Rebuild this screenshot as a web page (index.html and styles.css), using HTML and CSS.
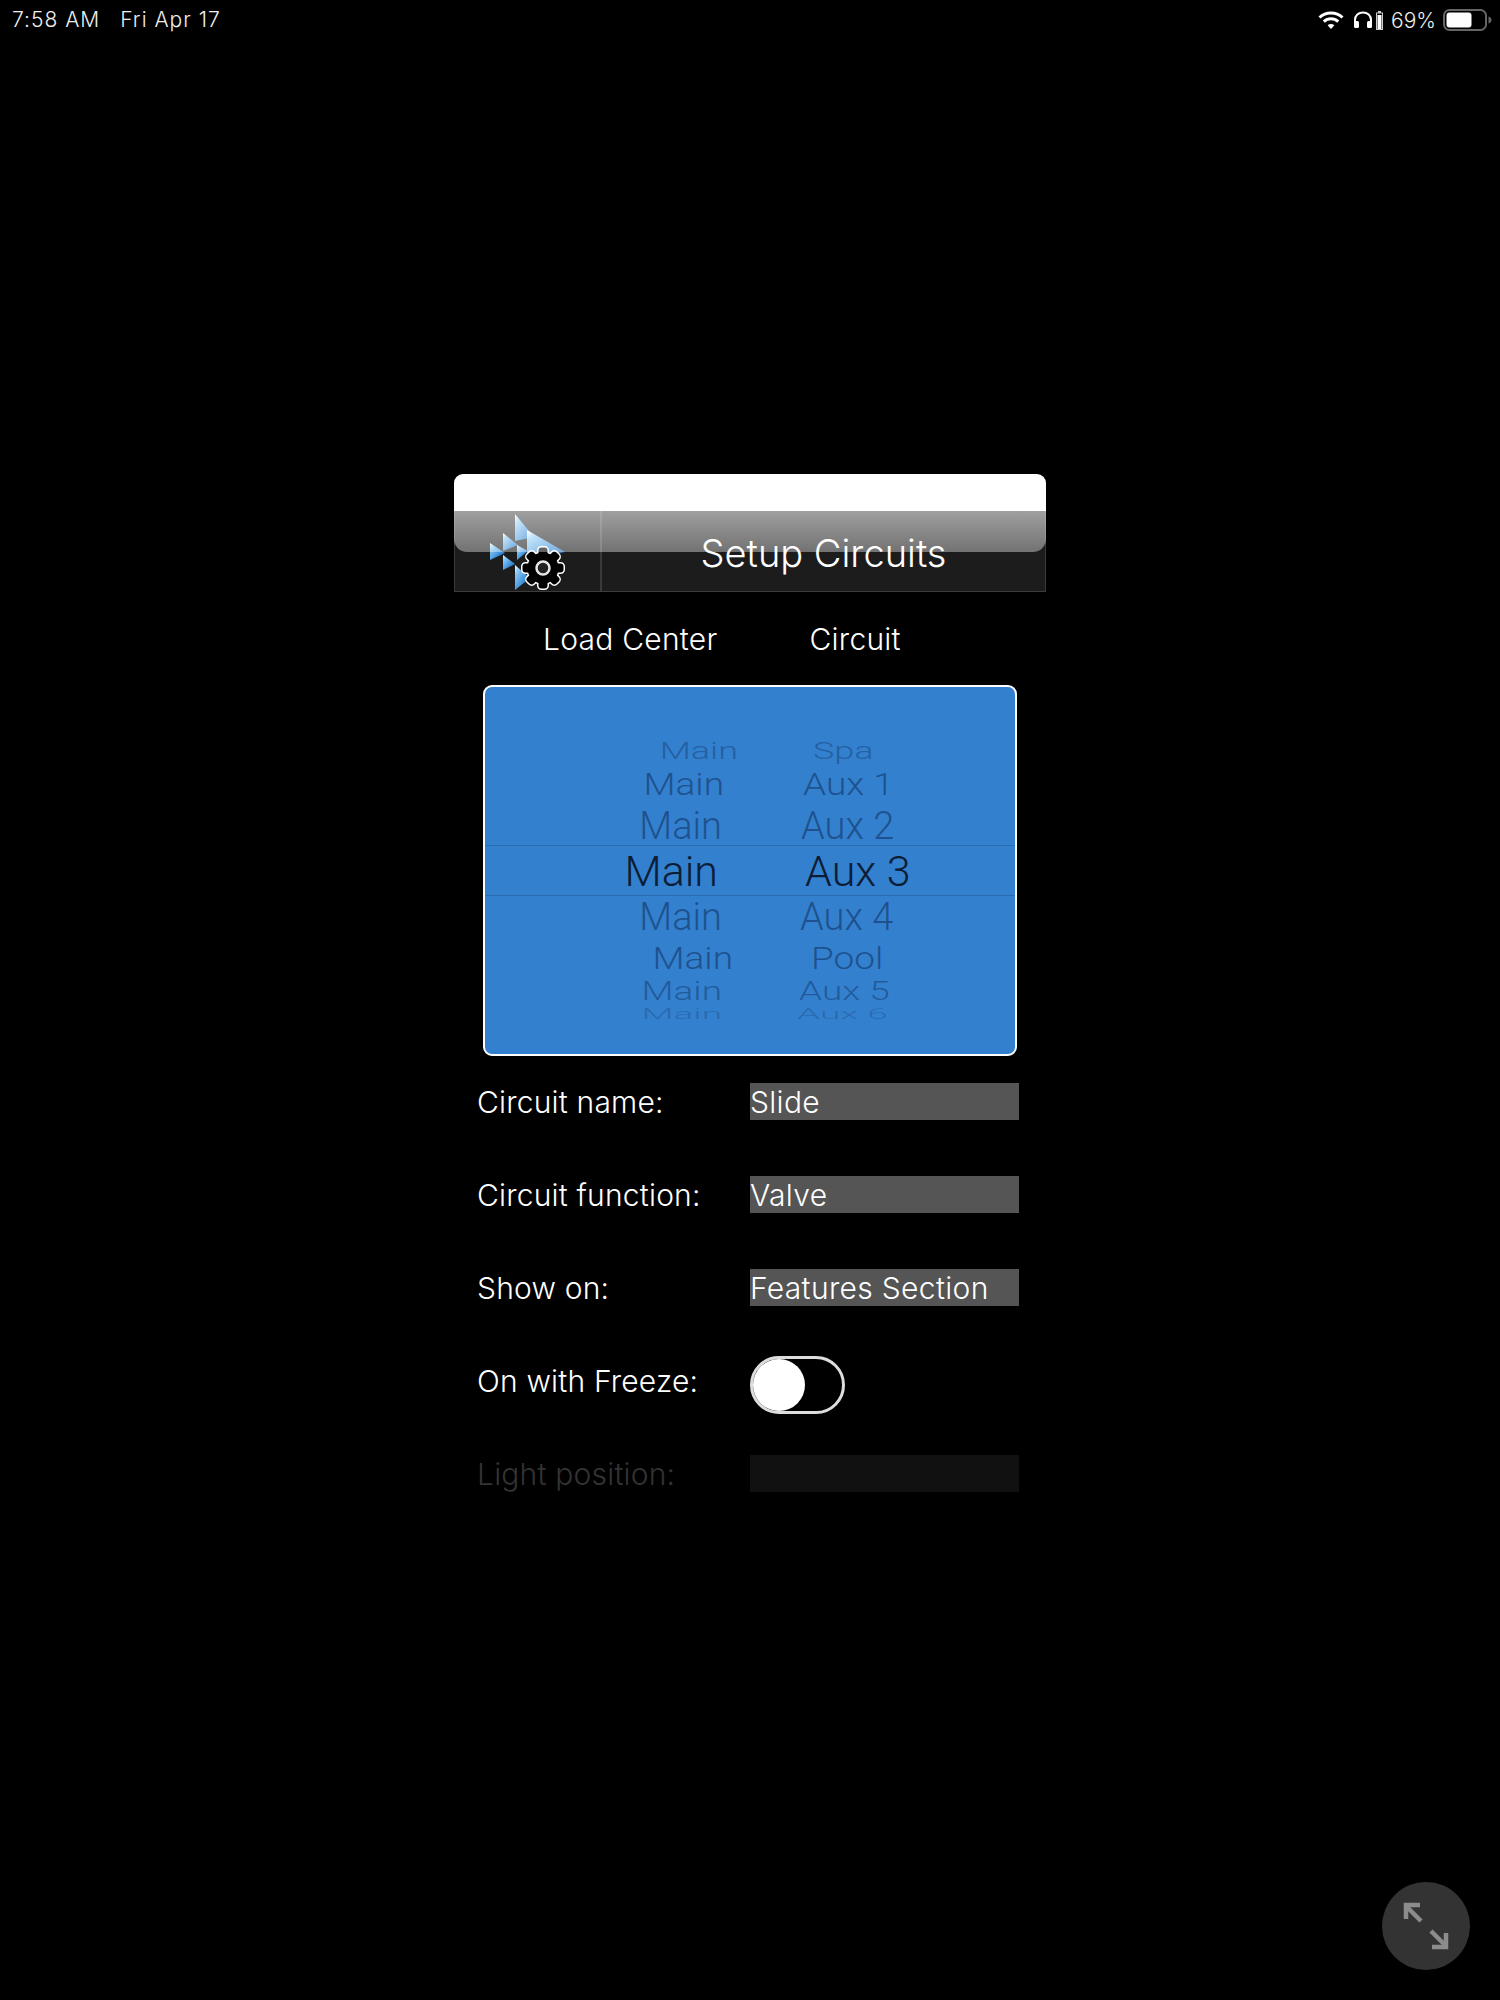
FILE: index.html
```html
<!DOCTYPE html>
<html lang="en">
<head>
<meta charset="utf-8">
<title>Setup Circuits</title>
<link rel="stylesheet" href="styles.css">
</head>
<body>
<div class="screen">
  <header class="status">
    <div class="status-left"><span>7:58 AM</span><span>Fri Apr 17</span></div>
    <div class="status-right">
      <svg class="ic-wifi" width="26" height="20" viewBox="0 0 26 20"><path d="M1.5 7.5C7.8 1.6 18.2 1.6 24.5 7.5" fill="none" stroke="#fff" stroke-width="3"/><path d="M5.8 11.6C9.9 7.9 16.1 7.9 20.2 11.6" fill="none" stroke="#fff" stroke-width="3"/><path d="M9.6 15.3C11.6 13.7 14.4 13.7 16.4 15.3L13 19Z" fill="#fff"/></svg>
      <svg class="ic-head" width="20" height="18" viewBox="0 0 20 18"><path d="M2 12V9C2 4.5 5.5 1.5 10 1.5S18 4.500 18 9V12" fill="none" stroke="#fff" stroke-width="2"/><rect x="1" y="10" width="5" height="7" rx="1.500" fill="#fff"/><rect x="14" y="10" width="5" height="7" rx="1.500" fill="#fff"/></svg>
      <svg class="ic-mini" width="7" height="19" viewBox="0 0 7 19"><rect x="2" y="0" width="3" height="2" fill="#ccc"/><rect x=".5" y="2" width="6" height="16.500" fill="none" stroke="#ccc"/><rect x="1.500" y="4" width="4" height="14" fill="#fff"/></svg>
      <span class="pct">69%</span>
      <svg class="ic-batt" width="49" height="22" viewBox="0 0 49 22"><rect x="1" y="1" width="42" height="20" rx="5.500" fill="none" stroke="#666" stroke-width="2"/><rect x="3.500" y="3.500" width="25" height="15" rx="3" fill="#fff"/><path d="M45.500 7.500C47.500 8 48.500 9.500 48.500 11S47.500 14 45.500 14.500Z" fill="#666"/></svg>
    </div>
  </header>

  <main class="panel">
    <section class="titlebar">
      <div class="title-white"></div>
      <div class="title-dark">
        <div class="logo-cell">
          <svg width="90" height="78" viewBox="0 0 90 78">
            <defs>
              <linearGradient id="tri" x1="0" y1="0" x2="1" y2="1">
                <stop offset="0" stop-color="#ffffff"/>
                <stop offset=".2" stop-color="#8ccaf2"/>
                <stop offset=".6" stop-color="#3f92dc"/>
                <stop offset="1" stop-color="#1464b8"/>
              </linearGradient>
              <g id="gear">
                <circle cx="0" cy="0" r="15.500"/>
                <rect x="-4.500" y="-20.500" width="9" height="41" rx="3"/>
                <rect x="-4.500" y="-20.500" width="9" height="41" rx="3" transform="rotate(45)"/>
                <rect x="-4.500" y="-20.500" width="9" height="41" rx="3" transform="rotate(90)"/>
                <rect x="-4.500" y="-20.500" width="9" height="41" rx="3" transform="rotate(135)"/>
              </g>
            </defs>
            <path d="M35 0L54 23L35 27Z" fill="url(#tri)"/>
            <path d="M47 16L85 38L47 46Z" fill="url(#tri)"/>
            <path d="M23 19L38 31L23 37Z" fill="url(#tri)"/>
            <path d="M10 29L25 39L10 46Z" fill="url(#tri)"/>
            <path d="M37 31L48 37L37 46Z" fill="url(#tri)"/>
            <path d="M23 41L35 50L23 56Z" fill="url(#tri)"/>
            <path d="M35 51L50 64L35 76Z" fill="url(#tri)"/>
            <g transform="translate(63 54)">
              <use href="#gear" fill="#fff" stroke="#fff" stroke-width="3"/>
              <use href="#gear" fill="#000"/>
              <circle r="6.500" fill="#222" stroke="#e6e6e6" stroke-width="2.500"/>
            </g>
          </svg>
        </div>
        <h1 class="title">Setup Circuits</h1>
        <div class="gloss"></div>
      </div>
    </section>

    <div class="col-heads"><span>Load Center</span><span>Circuit</span></div>

    <section class="picker">
      <div class="band"></div>
      <div class="wheel r1"><span class="c1">Main</span><span class="c2">Spa</span></div>
      <div class="wheel r2"><span class="c1">Main</span><span class="c2">Aux 1</span></div>
      <div class="wheel r3"><span class="c1">Main</span><span class="c2">Aux 2</span></div>
      <div class="wheel sel"><span class="c1">Main</span><span class="c2">Aux 3</span></div>
      <div class="wheel r5"><span class="c1">Main</span><span class="c2">Aux 4</span></div>
      <div class="wheel r6"><span class="c1">Main</span><span class="c2">Pool</span></div>
      <div class="wheel r7"><span class="c1">Main</span><span class="c2">Aux 5</span></div>
      <div class="wheel r8"><span class="c1">Main</span><span class="c2">Aux 6</span></div>
    </section>

    <section class="form">
      <div class="row"><span class="lbl">Circuit name:</span><span class="val">Slide</span></div>
      <div class="row"><span class="lbl">Circuit function:</span><span class="val">Valve</span></div>
      <div class="row"><span class="lbl">Show on:</span><span class="val">Features Section</span></div>
      <div class="row"><span class="lbl">On with Freeze:</span><span class="toggle"><span class="knob"></span></span></div>
      <div class="row off"><span class="lbl">Light position:</span><span class="val"></span></div>
    </section>
  </main>

  <div class="expand">
    <svg width="88" height="88" viewBox="0 0 88 88">
      <g fill="none" stroke="#8c8c8c" stroke-width="4.500">
        <path d="M24 24L39 39"/><path d="M24 37V23H38"/>
        <path d="M64 64L49 49"/><path d="M64 51V65H50"/>
      </g>
    </svg>
  </div>
</div>
</body>
</html>
```

FILE: styles.css
```css
* { box-sizing: border-box; }
html, body { margin: 0; padding: 0; background: #000; }
body { font-family: Inter, Roboto, "Liberation Sans", sans-serif; color: #fff; }
.screen { position: relative; width: 1500px; height: 2000px; background: #000; overflow: hidden; }

.status { height: 40px; display: flex; justify-content: space-between; align-items: center; padding: 0 8px 2px 12px; font-size: 21px; letter-spacing: 1px; font-weight: 300; color: #eee; }
.status-left { display: flex; gap: 20px; }
.status-right { display: flex; align-items: center; padding-top: 2px; }
.ic-wifi { margin-right: 9px; }
.ic-head { margin-right: 3px; }
.ic-mini { margin-right: 8px; }
.pct { width: 46px; margin-right: 6px; letter-spacing: 0; white-space: nowrap; }

.panel { width: 592px; margin: 434px 0 0 454px; }

.titlebar { height: 118px; display: flex; flex-direction: column; }
.title-white { flex: none; height: 37px; background: #fff; border-radius: 9px 9px 0 0; }
.title-dark { position: relative; flex: none; height: 81px; display: flex; background: #1c1c1c; border: 1px solid #3c3c3c; border-top: 0; }
.logo-cell { width: 147px; height: 80px; border-right: 2px solid #3a3a3a; padding: 3px 0 0 25px; }
.logo-cell svg { display: block; overflow: visible; }
.title { flex: 1; margin: 0; text-align: center; font-weight: 300; font-size: 38px; line-height: 84px; height: 80px; }
.gloss { position: absolute; left: -1px; right: -1px; top: 0; height: 41px; border-radius: 0 0 13px 13px; background: linear-gradient(rgba(255,255,255,.58), rgba(255,255,255,.38)); }

.col-heads { display: flex; gap: 92px; padding-left: 89px; margin-top: 29px; height: 37px; font-size: 30px; letter-spacing: .25px; font-weight: 300; line-height: 37px; }

.picker { position: relative; width: 534px; height: 371px; margin: 27px 0 0 29px; background: #3380ce; border: 2px solid #fff; border-radius: 9px; padding-top: 38px; overflow: hidden; }
.band { position: absolute; left: 0; right: 0; top: 158px; height: 51px; border-top: 1px solid #2a6aae; border-bottom: 1px solid #2a6aae; }
.wheel { display: flex; align-items: flex-end; font-family: Roboto, Inter, sans-serif; font-weight: 300; font-size: 36px; line-height: 36px; color: rgba(16,50,98,.6); }
.c1, .c2 { display: block; white-space: nowrap; transform-origin: 50% 84%; transform: scaleY(var(--sy)); }
.c1 { width: var(--r); text-align: right; }
.c2 { margin-left: var(--g); }
.r1 { --r: 253px; --g: 75px; --sy: .68; height: 40px; font-size: 36px; color: rgba(16,50,98,.42); }
.r2 { --r: 239px; --g: 79px; --sy: .87; height: 36px; font-size: 37px; }
.r3 { --r: 237px; --g: 79px; --sy: 1; height: 44px; font-size: 38px; line-height: 38px; }
.sel { --r: 233px; --g: 87px; --sy: 1; height: 48px; font-size: 43px; line-height: 43px; color: #0c1d35; font-weight: 300; }
.r5 { --r: 237px; --g: 78px; --sy: 1; height: 43px; font-size: 38px; line-height: 38px; }
.r6 { --r: 248px; --g: 78px; --sy: .87; height: 39px; font-size: 37px; }
.r7 { --r: 237px; --g: 77px; --sy: .68; height: 31px; font-size: 37px; color: rgba(16,50,98,.48); }
.r8 { --r: 237px; --g: 75px; --sy: .42; height: 19px; font-size: 37px; color: rgba(16,50,98,.28); }

.form { margin: 27px 0 0 23px; display: flex; flex-direction: column; gap: 56px; }
.row { display: flex; height: 37px; font-size: 30px; font-weight: 300; line-height: 39px; }
.lbl { width: 273px; letter-spacing: .2px; }
.val { width: 269px; background: #555; height: 37px; letter-spacing: .33px; }
.off .lbl { color: #333; }
.off .val { background: #111; }
.toggle { width: 95px; height: 58px; margin-top: -6px; border: 3px solid #ddd; border-radius: 29px; background: #000; display: block; }
.knob { display: block; width: 52px; height: 52px; border-radius: 50%; background: #fff; }

.expand { position: absolute; left: 1382px; top: 1882px; width: 88px; height: 88px; border-radius: 50%; background: #333; }
.expand svg { display: block; }
```
